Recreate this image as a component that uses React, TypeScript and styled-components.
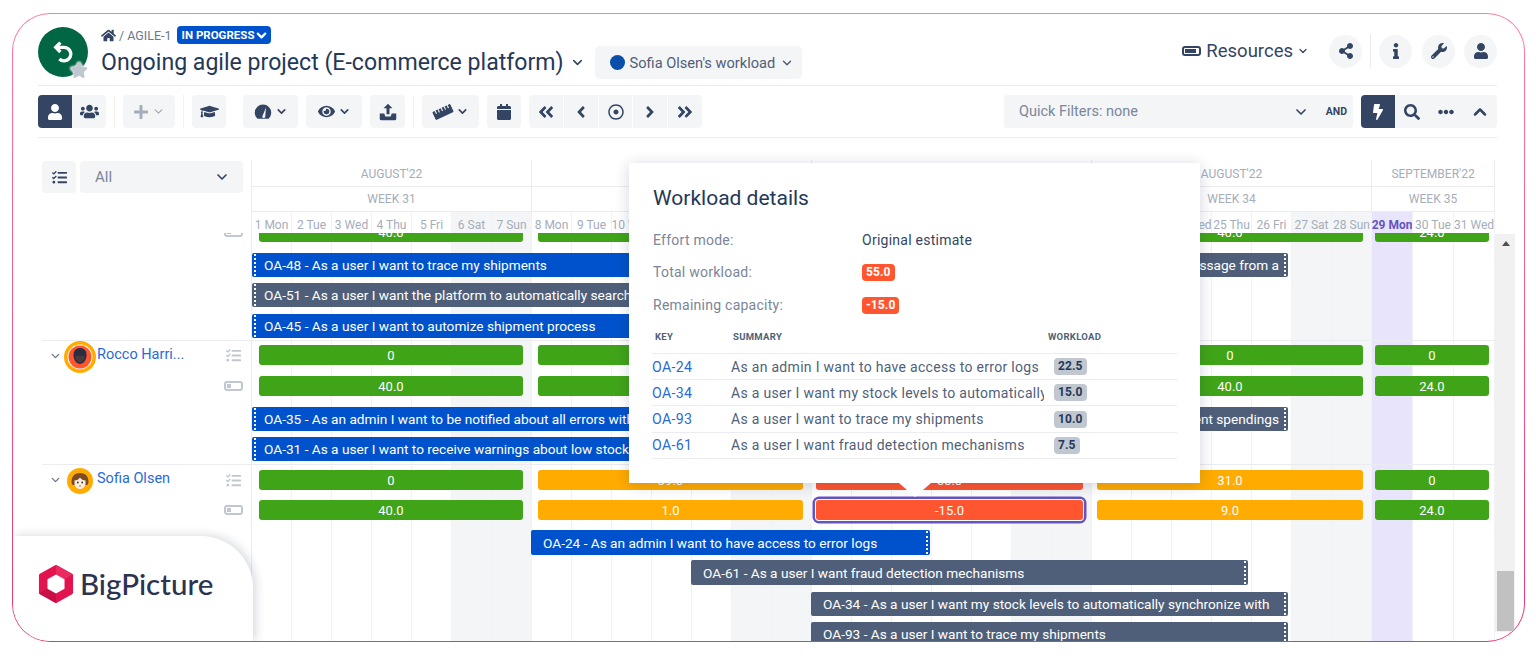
import React from "react";
import styled, { createGlobalStyle } from "styled-components";
import { ChevronDown, ChevronUp } from "lucide-react";
import {
  FaAngleDoubleLeft,
  FaAngleDoubleRight,
  FaAngleLeft,
  FaAngleRight,
  FaBolt,
  FaCalendar,
  FaEllipsisH,
  FaEye,
  FaGraduationCap,
  FaHome,
  FaInfo,
  FaPlus,
  FaRegDotCircle,
  FaRulerHorizontal,
  FaSearch,
  FaShareAlt,
  FaStar,
  FaTasks,
  FaUser,
  FaUsers,
  FaWrench,
} from "react-icons/fa";

const GlobalStyle = createGlobalStyle`
  html, body {
    margin: 0;
    height: 661px;
    overflow: hidden;
    background: #fff;
    font-family: Roboto, "Liberation Sans", sans-serif;
  }
`;

const COLS = "repeat(28, 40px) repeat(3, 41px)";
const GREEN = "#40a419";
const ORANGE = "#ffab00";
const RED = "#ff5630";

const Frame = styled.div`
  position: relative;
  box-sizing: border-box;
  width: 1513px;
  height: 629px;
  margin: 13px 0 0 12px;
  padding: 12px 27px 0 25px;
  display: flex;
  flex-direction: column;
  border: 1px solid transparent;
  border-radius: 38px;
  background: linear-gradient(#fff, #fff) padding-box,
    linear-gradient(#ff7aa6, #e9366f) border-box;
  overflow: hidden;
`;

const Header = styled.header`
  display: flex;
  height: 59px;
  flex: none;
  border-bottom: 1px solid #ebecf0;
`;

const ProjectAvatar = styled.div`
  position: relative;
  flex: none;
  width: 50px;
  height: 50px;
  margin-top: 1px;
  border-radius: 50%;
  background: #006644;
  color: #fff;
  display: flex;
  align-items: center;
  justify-content: center;
`;

const ProjectStar = styled.div`
  position: absolute;
  right: -1px;
  bottom: -3px;
  width: 20px;
  height: 20px;
  display: flex;
  align-items: center;
  justify-content: center;
  color: #c1c7d0;
  font-size: 18px;
  filter: drop-shadow(0 0 1px #fff) drop-shadow(0 0 1px #fff);
`;

const TitleBlock = styled.div`
  margin-left: 13px;
`;

const Breadcrumb = styled.div`
  height: 18px;
  margin-bottom: 2px;
  display: flex;
  align-items: center;
  font-size: 12.5px;
  color: #6b778c;
  svg {
    color: #344563;
    font-size: 15px;
    margin-right: 3px;
  }
`;

const StatusBadge = styled.div`
  height: 18px;
  margin-left: 5px;
  padding: 0 2px 0 5px;
  display: flex;
  align-items: center;
  border-radius: 4px;
  background: #0052cc;
  color: #fff;
  font-size: 11.5px;
  font-weight: 700;
  svg {
    color: #fff;
    margin: 0;
    font-size: 14px;
  }
`;

const TitleRow = styled.div`
  height: 33px;
  display: flex;
  align-items: center;
`;

const Title = styled.h1`
  margin: 0;
  font-size: 23.1px;
  font-weight: 400;
  color: #253858;
  white-space: nowrap;
`;

const TitleChevron = styled.span`
  display: flex;
  margin: 0 10px 0 6px;
  color: #344563;
`;

const ViewPill = styled.div`
  height: 33px;
  width: 207px;
  box-sizing: border-box;
  padding-left: 15px;
  display: flex;
  align-items: center;
  gap: 5px;
  border-radius: 5px;
  background: #f4f5f7;
  color: #505f79;
  font-size: 14.6px;
  white-space: nowrap;
`;

const ViewDot = styled.span`
  width: 15px;
  height: 15px;
  border-radius: 50%;
  background: #0b4fab;
`;

const HeaderRight = styled.div`
  margin: 8px 0 0 auto;
  height: 34px;
  display: flex;
  align-items: center;
  color: #344563;
`;

const Resources = styled.div`
  display: flex;
  align-items: center;
  font-size: 18.5px;
  color: #344563;
  margin-right: 20px;
  svg:first-child {
    margin-right: 5px;
  }
  svg:last-child {
    margin-left: 4px;
  }
`;

const RoundButton = styled.div<{ $ml?: number }>`
  width: 33px;
  height: 33px;
  margin-left: ${(p) => p.$ml ?? 0}px;
  display: flex;
  align-items: center;
  justify-content: center;
  border-radius: 50%;
  background: #f4f5f7;
  font-size: 16px;
  color: #344563;
`;

const HeaderDivider = styled.div`
  width: 1px;
  height: 34px;
  margin: 0 8px;
  background: #ebecf0;
`;

const Toolbar = styled.div`
  flex: none;
  height: 52px;
  box-sizing: border-box;
  padding-top: 9px;
  display: flex;
  align-items: flex-start;
  gap: 8px;
  border-bottom: 1px solid #ebecf0;
`;

const ToolGroup = styled.div<{ $gap?: number }>`
  display: flex;
  gap: ${(p) => p.$gap ?? 0}px;
  border-radius: 4px;
  overflow: hidden;
`;

const ToolButton = styled.div<{ $w: number; $active?: boolean; $off?: boolean; $ml?: number }>`
  flex: none;
  width: ${(p) => p.$w}px;
  height: 33px;
  margin-left: ${(p) => p.$ml ?? 0}px;
  display: flex;
  align-items: center;
  justify-content: center;
  gap: 3px;
  background: ${(p) => (p.$active ? "#344563" : "#f4f5f7")};
  color: ${(p) => (p.$active ? "#fff" : p.$off ? "#a5adba" : "#344563")};
  border-radius: ${(p) => (p.$ml !== undefined || p.$w > 34 ? "4px" : "0")};
  font-size: 16px;
`;

const SoloButton = styled(ToolButton)`
  border-radius: 4px;
`;

const ToolDivider = styled.div`
  flex: none;
  width: 1px;
  height: 33px;
  background: #f1f2f4;
`;

const QuickFilter = styled.div`
  margin-left: auto;
  width: 349px;
  height: 33px;
  box-sizing: border-box;
  padding: 0 6px 0 15px;
  display: flex;
  align-items: center;
  border-radius: 4px;
  background: #f4f5f7;
  color: #7a869a;
  font-size: 14.5px;
  svg {
    margin-left: auto;
    color: #344563;
  }
`;

const AndLabel = styled.span`
  margin-left: 17px;
  font-size: 10.5px;
  font-weight: 700;
  color: #344563;
`;

const Chart = styled.div`
  flex: 1;
  min-height: 0;
  margin: 22px -17px 0 4px;
  display: flex;
  flex-direction: column;
`;

const ChartHead = styled.div`
  flex: none;
  height: 73px;
  display: flex;
`;

const LeftFilter = styled.div`
  flex: none;
  width: 210px;
  box-sizing: border-box;
  padding-top: 1px;
  display: flex;
  gap: 4px;
`;

const ListButton = styled.div`
  width: 34px;
  height: 32px;
  display: flex;
  align-items: center;
  justify-content: center;
  border-radius: 4px;
  background: #f4f5f7;
  color: #344563;
  font-size: 15px;
`;

const AllSelect = styled.div`
  width: 163px;
  height: 32px;
  box-sizing: border-box;
  padding: 0 13px 0 15px;
  display: flex;
  align-items: center;
  justify-content: space-between;
  border-radius: 4px;
  background: #f4f5f7;
  color: #7a869a;
  font-size: 15px;
  svg {
    color: #344563;
  }
`;

const TimeHead = styled.div`
  width: 1243px;
  border-left: 1px solid #ebecf0;
  margin-left: -1px;
`;

const HeadRow = styled.div<{ $h: number; $pt?: number }>`
  display: grid;
  grid-template-columns: ${COLS};
  height: ${(p) => p.$h}px;
  box-sizing: content-box;
  border-bottom: 1px solid #ebecf0;
  & > div {
    padding-top: ${(p) => p.$pt ?? 0}px;
  }
`;

const HeadCell = styled.div<{ $span: number }>`
  grid-column: span ${(p) => p.$span};
  display: flex;
  align-items: center;
  justify-content: center;
  border-right: 1px solid #ebecf0;
  color: #a5adba;
  font-size: 12px;
  white-space: nowrap;
`;

const DayRow = styled.div`
  display: grid;
  grid-template-columns: ${COLS};
  height: 21px;
`;

const DayCell = styled.div<{ $kind: string }>`
  display: flex;
  align-items: center;
  justify-content: center;
  padding-top: 4px;
  box-sizing: border-box;
  overflow: hidden;
  white-space: nowrap;
  font-size: 12px;
  border-right: 1px solid #f1f2f4;
  font-weight: ${(p) => (p.$kind === "today" ? 700 : 400)};
  color: ${(p) => (p.$kind === "today" ? "#6554c0" : "#a5adba")};
  background: ${(p) => (p.$kind === "today" ? "#e8e4fb" : p.$kind === "weekend" ? "#f4f5f7" : "#fff")};
`;

const ChartBody = styled.div`
  flex: 1;
  min-height: 0;
  display: flex;
  align-items: flex-start;
`;

const Scroller = styled.div`
  position: relative;
  flex: none;
  width: 1453px;
  height: 100%;
  overflow: hidden;
`;

const Columns = styled.div`
  position: absolute;
  top: 0;
  bottom: 0;
  left: 209px;
  display: grid;
  grid-template-columns: ${COLS};
  border-left: 1px solid #ebecf0;
`;

const ColumnShade = styled.div<{ $kind: string }>`
  border-right: 1px solid #f1f2f4;
  background: ${(p) => (p.$kind === "today" ? "#e8e4fb" : p.$kind === "weekend" ? "#f4f5f7" : "transparent")};
`;

const Group = styled.div<{ $h: number; $line?: boolean }>`
  position: relative;
  z-index: 1;
  display: flex;
  height: ${(p) => p.$h}px;
  border-bottom: ${(p) => (p.$line ? "1px solid #ebecf0" : "none")};
`;

const GroupLeft = styled.div`
  flex: none;
  width: 210px;
  box-sizing: border-box;
  padding-left: 7px;
  display: flex;
  align-items: flex-start;
  color: #8993a4;
`;

const UserChevron = styled.span<{ $top: number }>`
  display: flex;
  width: 13px;
  margin-top: ${(p) => p.$top}px;
  color: #6b778c;
`;

const AvatarSlot = styled.span<{ $top: number }>`
  width: 35px;
  margin-top: ${(p) => p.$top}px;
  display: flex;
  justify-content: center;
`;

const UserName = styled.a<{ $top: number }>`
  margin-top: ${(p) => p.$top}px;
  color: #2a6ad8;
  font-size: 14.5px;
  white-space: nowrap;
`;

const GroupIcons = styled.div<{ $top: number; $gap: number }>`
  margin: ${(p) => p.$top}px 9px 0 auto;
  width: 20px;
  display: flex;
  flex-direction: column;
  gap: ${(p) => p.$gap}px;
`;

const GroupIcon = styled.span`
  height: 20px;
  display: flex;
  align-items: center;
  justify-content: center;
  font-size: 15px;
  color: #c1c7d0;
`;

const Rows = styled.div`
  flex: none;
  width: 1243px;
`;

const Row = styled.div<{ $h: number; $top: number }>`
  display: grid;
  grid-template-columns: ${COLS};
  grid-template-rows: ${(p) => p.$h}px;
  margin-top: ${(p) => p.$top}px;
`;

const Bar = styled.div<{ $color: string; $from: number; $days: number; $ml: number; $mr: number; $picked?: boolean }>`
  grid-row: 1;
  grid-column: ${(p) => p.$from} / span ${(p) => p.$days};
  margin: 0 ${(p) => p.$mr}px 0 ${(p) => p.$ml}px;
  display: flex;
  align-items: center;
  justify-content: center;
  border-radius: 3px;
  background: ${(p) => p.$color};
  color: #fff;
  font-size: 13px;
  box-shadow: ${(p) => (p.$picked ? "0 0 0 1px #fff, 0 0 0 3.5px #6554c0" : "none")};
`;

const Task = styled.div<{
  $grey?: boolean;
  $from: number;
  $days: number;
  $ml?: number;
  $mr?: number;
  $dots: "left" | "right";
  $end?: boolean;
}>`
  position: relative;
  grid-row: 1;
  grid-column: ${(p) => p.$from} / span ${(p) => p.$days};
  margin: 0 ${(p) => p.$mr ?? 4}px 0 ${(p) => p.$ml ?? -1}px;
  box-sizing: border-box;
  padding: 0 ${(p) => (p.$end ? 9 : 11)}px 0 12px;
  min-width: 0;
  display: flex;
  align-items: center;
  justify-content: ${(p) => (p.$end ? "flex-end" : "flex-start")};
  overflow: hidden;
  white-space: nowrap;
  border-radius: 2px;
  background: ${(p) => (p.$grey ? "#505f79" : "#0052cc")};
  color: #fff;
  font-size: 13.65px;
  &::after {
    content: "";
    position: absolute;
    top: 1px;
    bottom: 1px;
    ${(p) => (p.$dots === "left" ? "left: 2px" : "right: 2px")};
    border-left: 2px dotted #fff;
  }
`;

const ScrollTrack = styled.div`
  flex: none;
  width: 20px;
  height: 398px;
  margin-top: 1px;
  box-sizing: border-box;
  padding: 7px 1px 0 2px;
  background: #f1f1f1;
  display: flex;
  flex-direction: column;
`;

const ScrollArrow = styled.div`
  align-self: center;
  width: 0;
  height: 0;
  border-left: 4px solid transparent;
  border-right: 4px solid transparent;
  border-bottom: 5px solid #505050;
`;

const ScrollThumb = styled.div`
  margin-top: auto;
  height: 60px;
  background: #c1c1c1;
  margin-bottom: 1px;
`;

const Popup = styled.div`
  position: absolute;
  z-index: 5;
  left: 616px;
  top: 149px;
  width: 571px;
  height: 320px;
  box-sizing: border-box;
  padding: 23px 23px 0 24px;
  background: #fff;
  box-shadow: 0 2px 14px rgba(9, 30, 66, 0.18);
  &::after {
    content: "";
    position: absolute;
    left: 270px;
    bottom: -14px;
    border-left: 16px solid transparent;
    border-right: 16px solid transparent;
    border-top: 14px solid #fff;
  }
`;

const PopupTitle = styled.div`
  font-size: 21px;
  line-height: 24px;
  color: #253858;
  margin-bottom: 14px;
`;

const InfoRow = styled.div`
  display: grid;
  grid-template-columns: 209px 1fr;
  align-items: center;
  height: 32.3px;
  font-size: 14px;
  letter-spacing: 0.25px;
  color: #7a869a;
`;

const InfoValue = styled.span`
  color: #344563;
`;

const Lozenge = styled.span<{ $bg: string; $fg: string }>`
  display: inline-block;
  padding: 0 4px;
  height: 17px;
  line-height: 17px;
  border-radius: 4px;
  background: ${(p) => p.$bg};
  color: ${(p) => p.$fg};
  font-size: 12px;
  font-weight: 700;
  letter-spacing: 0.1px;
`;

const TableHead = styled.div`
  display: grid;
  grid-template-columns: 78px 315px 1fr;
  margin-top: 0;
  padding-left: 3px;
  margin-left: -1px;
  height: 32px;
  align-items: center;
  border-bottom: 1px solid #ebecf0;
  font-size: 9.5px;
  font-weight: 700;
  letter-spacing: 0.3px;
  color: #505f79;
`;

const TableRow = styled.div`
  display: grid;
  grid-template-columns: 79px 313px 1fr;
  margin-left: -1px;
  height: 26.3px;
  box-sizing: border-box;
  align-items: center;
  border-bottom: 1px solid #ebecf0;
  font-size: 14px;
  color: #505f79;
  letter-spacing: 0.3px;
`;

const IssueKey = styled.a`
  color: #2a6ad8;
  font-size: 14.2px;
`;

const Summary = styled.span`
  overflow: hidden;
  white-space: nowrap;
`;

const BadgeCell = styled.span`
  margin-left: 10px;
  display: flex;
`;

const LogoCard = styled.div`
  position: absolute;
  z-index: 4;
  left: 0;
  bottom: 0;
  width: 240px;
  height: 105px;
  box-sizing: border-box;
  padding: 0 0 10px 25px;
  display: flex;
  align-items: center;
  gap: 6px;
  background: #fff;
  border-top-right-radius: 52px;
  box-shadow: 3px -1px 10px rgba(9, 30, 66, 0.16);
`;

const LogoText = styled.span`
  font-family: Lato, Roboto, sans-serif;
  font-size: 29.5px;
  font-weight: 500;
  color: #2b3350;
`;

const ProjectIcon = () => (
  <svg width="27" height="27" viewBox="0 0 26 26" fill="none" stroke="#fff" strokeWidth="3.2">
    <path d="M6 8h7.500a6.500 6.500 0 1 1-4.500 11.200" />
    <path d="M10 3.500 5.500 8l4.500 4.500" />
  </svg>
);

const GaugeIcon = () => (
  <svg width="18" height="18" viewBox="0 0 24 24">
    <path d="M4.500 21a11 11 0 1 1 15 0z" fill="#344563" />
    <path d="M16 6 L11 18 a2 2 0 0 0 4 0z" fill="#f4f5f7" />
  </svg>
);

const BatteryIcon = ({ w = 19 }: { w?: number }) => (
  <svg width={w} height={w * 0.53} viewBox="0 0 19 10">
    <rect x="1" y="1" width="17" height="8" rx="2" fill="none" stroke="currentColor" strokeWidth="2" />
    <rect x="3" y="3" width="4" height="4" fill="currentColor" />
  </svg>
);

const ResourceIcon = () => (
  <svg width="19" height="10" viewBox="0 0 19 10">
    <rect x="1" y="1" width="17" height="8" rx="2" fill="none" stroke="#344563" strokeWidth="2" />
    <rect x="3" y="3" width="11" height="4" fill="#344563" />
  </svg>
);

const UploadIcon = () => (
  <svg width="18" height="18" viewBox="0 0 24 24" fill="currentColor">
    <path d="M12 1l6 6h-4v8h-4V7H6z" />
    <path d="M1 14h6l1.500 4h7L17 14h6v7a2 2 0 0 1-2 2H3a2 2 0 0 1-2-2z" />
  </svg>
);

const RoccoAvatar = () => (
  <svg width="32" height="32" viewBox="0 0 32 32">
    <circle cx="16" cy="16" r="16" fill={ORANGE} />
    <circle cx="16" cy="16" r="12.500" fill="#fff" />
    <circle cx="16" cy="16" r="11.500" fill={RED} />
    <path d="M9.500 14c0-5 3-7 6.500-7s6.500 2 6.500 7c0 5-3 9-6.500 9s-6.500-4-6.500-9z" fill="#2b2d42" />
    <path d="M11.500 15h9c0 4-2 6.500-4.500 6.500s-4.500-2.500-4.500-6.500z" fill="#4a3a3f" />
  </svg>
);

const SofiaAvatar = () => (
  <svg width="26" height="26" viewBox="0 0 26 26">
    <circle cx="13" cy="13" r="13" fill={ORANGE} />
    <path d="M4.500 14c0-6 3.500-9 8.500-9s8.500 3 8.500 9c0 2-1 3-2 3H6.500c-1 0-2-1-2-3z" fill="#7d4a24" />
    <path d="M7.500 12.500c2 0 4.500-1 5.500-3 1 2 3.500 3 5.500 3v3c0 3-2.500 5.500-5.500 5.500s-5.500-2.500-5.500-5.500z" fill="#fdeee0" />
    <circle cx="10.800" cy="14.500" r="0.900" fill="#333" />
    <circle cx="15.200" cy="14.500" r="0.900" fill="#333" />
    <rect x="12" y="17.500" width="2" height="0.900" fill="#b5563f" />
  </svg>
);

const LogoMark = () => (
  <svg width="36" height="40" viewBox="0 0 38 42">
    <path
      d="M19 3 L35 12 V30 L19 39 L3 30 V12 Z"
      fill="#e2134f"
      stroke="#e2134f"
      strokeWidth="4"
      strokeLinejoin="round"
    />
    <path d="M19 1 L37 11 L28 16 L19 11 Z" fill="#ea2a60" />
    <path d="M1 31 L10 26 L19 31 V41 Z" fill="#c70f47" />
    <path d="M19 11 L10 16 V26 L19 31 L28 26 V16 Z" fill="#fff" />
  </svg>
);

const dayNames = ["Mon", "Tue", "Wed", "Thu", "Fri", "Sat", "Sun"];
const days = Array.from({ length: 31 }, (_, i) => {
  const name = dayNames[i % 7];
  const kind = i === 28 ? "today" : name === "Sat" || name === "Sun" ? "weekend" : "day";
  return { label: `${i + 1} ${name}`, kind };
});

const periods = [
  { span: 7, month: "AUGUST'22", week: "WEEK 31" },
  { span: 7, month: "AUGUST'22", week: "WEEK 32" },
  { span: 7, month: "AUGUST'22", week: "WEEK 33" },
  { span: 7, month: "AUGUST'22", week: "WEEK 34" },
  { span: 3, month: "SEPTEMBER'22", week: "WEEK 35" },
];

const slots = [
  { from: 1, days: 7, ml: 7, mr: 9 },
  { from: 8, days: 7, ml: 6, mr: 9 },
  { from: 15, days: 7, ml: 4, mr: 9 },
  { from: 22, days: 7, ml: 5, mr: 9 },
  { from: 29, days: 3, ml: 3, mr: 6 },
];

type Cell = { color: string; text: string; picked?: boolean };

const cells = (colors: string[], texts: string[]): Cell[] =>
  colors.map((color, i) => ({ color, text: texts[i] }));

const allGreen = [GREEN, GREEN, GREEN, GREEN, GREEN];

const WeekBars = ({ data, h = 20, top }: { data: Cell[]; h?: number; top: number }) => (
  <Row $h={h} $top={top}>
    {data.map((c, i) => (
      <Bar key={i} $color={c.color} $from={slots[i].from} $days={slots[i].days} $ml={slots[i].ml} $mr={slots[i].mr} $picked={c.picked}>
        {c.text}
      </Bar>
    ))}
  </Row>
);

const workloadRows = [
  { key: "OA-24", text: "As an admin I want to have access to error logs", load: "22.5" },
  { key: "OA-34", text: "As a user I want my stock levels to automatically synchronize with", load: "15.0" },
  { key: "OA-93", text: "As a user I want to trace my shipments", load: "10.0" },
  { key: "OA-61", text: "As a user I want fraud detection mechanisms", load: "7.5" },
];

const sofiaLoad = cells([GREEN, ORANGE, RED, ORANGE, GREEN], ["0", "39.0", "55.0", "31.0", "0"]);
const sofiaFree: Cell[] = [
  { color: GREEN, text: "40.0" },
  { color: ORANGE, text: "1.0" },
  { color: RED, text: "-15.0", picked: true },
  { color: ORANGE, text: "9.0" },
  { color: GREEN, text: "24.0" },
];

export default function App() {
  return (
    <>
      <GlobalStyle />
      <Frame>
        <Header>
          <ProjectAvatar>
            <ProjectIcon />
            <ProjectStar>
              <FaStar />
            </ProjectStar>
          </ProjectAvatar>
          <TitleBlock>
            <Breadcrumb>
              <FaHome /> / AGILE-1
              <StatusBadge>
                IN PROGRESS
                <ChevronDown size={15} strokeWidth={3.5} />
              </StatusBadge>
            </Breadcrumb>
            <TitleRow>
              <Title>Ongoing agile project (E-commerce platform)</Title>
              <TitleChevron>
                <ChevronDown size={15} strokeWidth={2.5} />
              </TitleChevron>
              <ViewPill>
                <ViewDot />
                Sofia Olsen's workload
                <ChevronDown size={14} strokeWidth={2.5} />
              </ViewPill>
            </TitleRow>
          </TitleBlock>
          <HeaderRight>
            <Resources>
              <ResourceIcon />
              Resources
              <ChevronDown size={12} strokeWidth={2.5} />
            </Resources>
            <RoundButton>
              <FaShareAlt />
            </RoundButton>
            <HeaderDivider />
            <RoundButton>
              <FaInfo />
            </RoundButton>
            <RoundButton $ml={10}>
              <FaWrench />
            </RoundButton>
            <RoundButton $ml={9}>
              <FaUser />
            </RoundButton>
          </HeaderRight>
        </Header>

        <Toolbar>
          <ToolGroup>
            <ToolButton $w={34} $active>
              <FaUser />
            </ToolButton>
            <ToolButton $w={34}>
              <FaUsers size={19} />
            </ToolButton>
          </ToolGroup>
          <ToolDivider />
          <ToolButton $w={52} $off>
            <FaPlus />
            <ChevronDown size={13} strokeWidth={2.5} />
          </ToolButton>
          <ToolDivider />
          <SoloButton $w={34}>
            <FaGraduationCap size={19} />
          </SoloButton>
          <ToolButton $w={55} $ml={9}>
            <GaugeIcon />
            <ChevronDown size={13} strokeWidth={3} />
          </ToolButton>
          <ToolButton $w={56}>
            <FaEye size={17} />
            <ChevronDown size={13} strokeWidth={3} />
          </ToolButton>
          <ToolButton $w={35}>
            <UploadIcon />
          </ToolButton>
          <ToolDivider />
          <ToolButton $w={57}>
            <FaRulerHorizontal size={20} style={{ transform: "rotate(-25deg)" }} />
            <ChevronDown size={13} strokeWidth={3} />
          </ToolButton>
          <SoloButton $w={34}>
            <FaCalendar />
          </SoloButton>
          <ToolGroup $gap={1}>
            <ToolButton $w={34}>
              <FaAngleDoubleLeft size={18} />
            </ToolButton>
            <ToolButton $w={34}>
              <FaAngleLeft size={18} />
            </ToolButton>
            <ToolButton $w={33}>
              <FaRegDotCircle />
            </ToolButton>
            <ToolButton $w={34}>
              <FaAngleRight size={18} />
            </ToolButton>
            <ToolButton $w={34}>
              <FaAngleDoubleRight size={18} />
            </ToolButton>
          </ToolGroup>
          <QuickFilter>
            Quick Filters: none
            <ChevronDown size={16} strokeWidth={2.5} />
            <AndLabel>AND</AndLabel>
          </QuickFilter>
          <ToolGroup>
            <ToolButton $w={34} $active>
              <FaBolt />
            </ToolButton>
            <ToolButton $w={34}>
              <FaSearch />
            </ToolButton>
            <ToolButton $w={34}>
              <FaEllipsisH />
            </ToolButton>
            <ToolButton $w={34}>
              <ChevronUp size={20} strokeWidth={3} />
            </ToolButton>
          </ToolGroup>
        </Toolbar>

        <Chart>
          <ChartHead>
            <LeftFilter>
              <ListButton>
                <FaTasks />
              </ListButton>
              <AllSelect>
                All
                <ChevronDown size={16} strokeWidth={2.5} />
              </AllSelect>
            </LeftFilter>
            <TimeHead>
              <HeadRow $h={26} $pt={2}>
                {periods.map((p, i) => (
                  <HeadCell key={i} $span={p.span}>
                    {p.month}
                  </HeadCell>
                ))}
              </HeadRow>
              <HeadRow $h={24}>
                {periods.map((p, i) => (
                  <HeadCell key={i} $span={p.span}>
                    {p.week}
                  </HeadCell>
                ))}
              </HeadRow>
              <DayRow>
                {days.map((d) => (
                  <DayCell key={d.label} $kind={d.kind}>
                    {d.label}
                  </DayCell>
                ))}
              </DayRow>
            </TimeHead>
          </ChartHead>

          <ChartBody>
            <Scroller>
              <Columns>
                {days.map((d) => (
                  <ColumnShade key={d.label} $kind={d.kind} />
                ))}
              </Columns>

              <Group $h={107} $line>
                <GroupLeft>
                  <GroupIcons $top={-11} $gap={0}>
                    <GroupIcon>
                      <BatteryIcon />
                    </GroupIcon>
                  </GroupIcons>
                </GroupLeft>
                <Rows>
                  <WeekBars data={cells(allGreen, ["40.0", "40.0", "40.0", "40.0", "24.0"])} top={-11} />
                  <Row $h={24} $top={11}>
                    <Task $from={1} $days={16} $ml={0} $dots="left">
                      OA-48 - As a user I want to trace my shipments
                    </Task>
                    <Task $from={17} $days={10} $grey $dots="right" $end>
                      OA-77 - As a user I want to receive a message from a
                    </Task>
                  </Row>
                  <Row $h={24} $top={6}>
                    <Task $from={1} $days={14} $ml={0} $grey $dots="left">
                      OA-51 - As a user I want the platform to automatically search for the best offers
                    </Task>
                  </Row>
                  <Row $h={24} $top={7}>
                    <Task $from={1} $days={14} $ml={0} $dots="left">
                      OA-45 - As a user I want to automize shipment process
                    </Task>
                  </Row>
                </Rows>
              </Group>

              <Group $h={123} $line>
                <GroupLeft>
                  <UserChevron $top={8}>
                    <ChevronDown size={14} strokeWidth={2.5} />
                  </UserChevron>
                  <AvatarSlot $top={0}>
                    <RoccoAvatar />
                  </AvatarSlot>
                  <UserName $top={5}>Rocco Harri...</UserName>
                  <GroupIcons $top={4} $gap={11}>
                    <GroupIcon>
                      <FaTasks />
                    </GroupIcon>
                    <GroupIcon>
                      <BatteryIcon />
                    </GroupIcon>
                  </GroupIcons>
                </GroupLeft>
                <Rows>
                  <WeekBars data={cells(allGreen, ["0", "0", "0", "0", "0"])} top={4} />
                  <WeekBars data={cells(allGreen, ["40.0", "40.0", "40.0", "40.0", "24.0"])} top={11} />
                  <Row $h={24} $top={11}>
                    <Task $from={1} $days={14} $ml={0} $dots="left">
                      OA-35 - As an admin I want to be notified about all errors with my deliveries
                    </Task>
                    <Task $from={17} $days={10} $grey $dots="right" $end>
                      OA-82 - As a user I want to see my recent spendings
                    </Task>
                  </Row>
                  <Row $h={24} $top={6}>
                    <Task $from={1} $days={14} $ml={0} $dots="left">
                      OA-31 - As a user I want to receive warnings about low stock levels
                    </Task>
                  </Row>
                </Rows>
              </Group>

              <Group $h={180}>
                <GroupLeft>
                  <UserChevron $top={8}>
                    <ChevronDown size={14} strokeWidth={2.5} />
                  </UserChevron>
                  <AvatarSlot $top={3}>
                    <SofiaAvatar />
                  </AvatarSlot>
                  <UserName $top={5}>Sofia Olsen</UserName>
                  <GroupIcons $top={5} $gap={10}>
                    <GroupIcon>
                      <FaTasks />
                    </GroupIcon>
                    <GroupIcon>
                      <BatteryIcon />
                    </GroupIcon>
                  </GroupIcons>
                </GroupLeft>
                <Rows>
                  <WeekBars data={sofiaLoad} top={5} />
                  <WeekBars data={sofiaFree} top={10} />
                  <Row $h={25} $top={10}>
                    <Task $from={8} $days={10} $mr={2} $dots="right">
                      OA-24 - As an admin I want to have access to error logs
                    </Task>
                  </Row>
                  <Row $h={25} $top={5}>
                    <Task $from={12} $days={14} $grey $dots="right">
                      OA-61 - As a user I want fraud detection mechanisms
                    </Task>
                  </Row>
                  <Row $h={24} $top={7}>
                    <Task $from={15} $days={12} $grey $dots="right">
                      OA-34 - As a user I want my stock levels to automatically synchronize with
                    </Task>
                  </Row>
                  <Row $h={24} $top={6}>
                    <Task $from={15} $days={12} $grey $dots="right">
                      OA-93 - As a user I want to trace my shipments
                    </Task>
                  </Row>
                </Rows>
              </Group>
            </Scroller>
            <ScrollTrack>
              <ScrollArrow />
              <ScrollThumb />
            </ScrollTrack>
          </ChartBody>
        </Chart>

        <Popup>
          <PopupTitle>Workload details</PopupTitle>
          <InfoRow>
            Effort mode:
            <InfoValue>Original estimate</InfoValue>
          </InfoRow>
          <InfoRow>
            Total workload:
            <span>
              <Lozenge $bg={RED} $fg="#fff">55.0</Lozenge>
            </span>
          </InfoRow>
          <InfoRow>
            Remaining capacity:
            <span>
              <Lozenge $bg={RED} $fg="#fff">-15.0</Lozenge>
            </span>
          </InfoRow>
          <TableHead>
            <span>KEY</span>
            <span>SUMMARY</span>
            <span>WORKLOAD</span>
          </TableHead>
          {workloadRows.map((r) => (
            <TableRow key={r.key}>
              <IssueKey>{r.key}</IssueKey>
              <Summary>{r.text}</Summary>
              <BadgeCell>
                <Lozenge $bg="#c1c7d0" $fg="#253858">{r.load}</Lozenge>
              </BadgeCell>
            </TableRow>
          ))}
        </Popup>

        <LogoCard>
          <LogoMark />
          <LogoText>BigPicture</LogoText>
        </LogoCard>
      </Frame>
    </>
  );
}
